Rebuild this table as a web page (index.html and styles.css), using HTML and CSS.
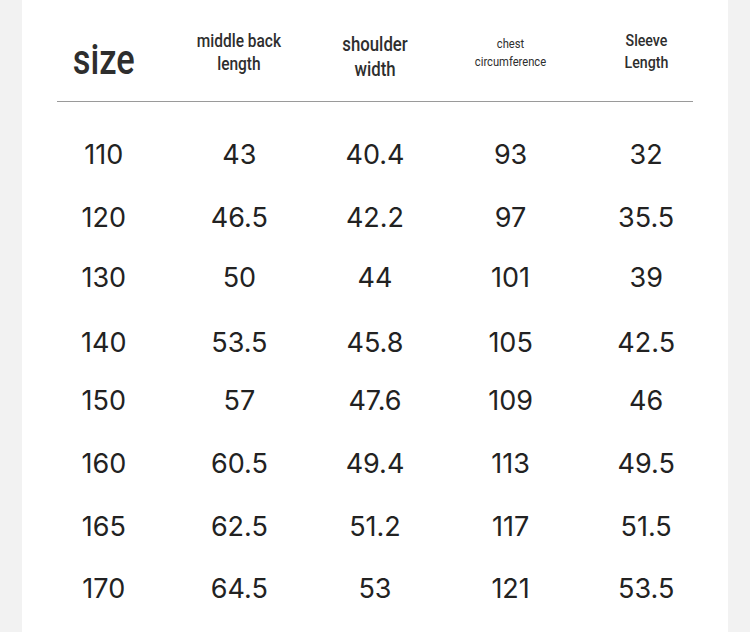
FILE: index.html
```html
<!DOCTYPE html>
<html>
<head>
<meta charset="utf-8">
<link rel="stylesheet" href="styles.css">
</head>
<body>
<div class="card">
  <div class="head">
    <div class="hcell"><span class="lbl size">size</span></div>
    <div class="hcell"><span class="lbl h-back">middle back<br>length</span></div>
    <div class="hcell"><span class="lbl h-shoulder">shoulder<br>width</span></div>
    <div class="hcell"><span class="lbl h-chest">chest<br>circumference</span></div>
    <div class="hcell"><span class="lbl h-sleeve">Sleeve<br>Length</span></div>
  </div>
  <div class="rule"></div>
  <div class="rows">
    <div class="row"><span>110</span><span>43</span><span>40.4</span><span>93</span><span>32</span></div>
    <div class="row"><span>120</span><span>46.5</span><span>42.2</span><span>97</span><span>35.5</span></div>
    <div class="row"><span>130</span><span>50</span><span>44</span><span>101</span><span>39</span></div>
    <div class="row"><span>140</span><span>53.5</span><span>45.8</span><span>105</span><span>42.5</span></div>
    <div class="row"><span>150</span><span>57</span><span>47.6</span><span>109</span><span>46</span></div>
    <div class="row"><span>160</span><span>60.5</span><span>49.4</span><span>113</span><span>49.5</span></div>
    <div class="row"><span>165</span><span>62.5</span><span>51.2</span><span>117</span><span>51.5</span></div>
    <div class="row"><span>170</span><span>64.5</span><span>53</span><span>121</span><span>53.5</span></div>
  </div>
</div>
</body>
</html>
```

FILE: styles.css
```css
html, body {
  margin: 0;
  padding: 0;
  background: #f2f2f2;
}
.card {
  margin: 0 22px;
  width: 706px;
  height: 632px;
  background: #ffffff;
  box-sizing: border-box;
  padding: 0 14px;
  overflow: hidden;
  color: #222;
}
.head {
  display: grid;
  grid-template-columns: repeat(5, 1fr);
  height: 101px;
  align-items: center;
}
.hcell {
  text-align: center;
}
.lbl {
  display: inline-block;
  font-family: "Roboto", sans-serif;
  font-weight: 500;
  color: #2e2e2e;
  transform: scaleX(0.86);
}
.size {
  font-size: 42px;
  line-height: 48px;
  transform: scaleX(0.82);
  padding-top: 18px;
}
.h-back {
  font-size: 18px;
  line-height: 23px;
  margin-top: 3px;
}
.h-shoulder {
  font-size: 19.5px;
  line-height: 25px;
  margin-top: 12px;
}
.h-chest {
  font-size: 13px;
  line-height: 18px;
  font-weight: 400;
  margin-top: 5px;
}
.h-sleeve {
  font-size: 16.5px;
  line-height: 22px;
  margin-top: 3px;
}
.rule {
  margin: 0 21px;
  height: 0;
  border-top: 1.5px solid #9a9a9a;
}
.rows {
  display: flex;
  flex-direction: column;
  padding-top: 32px;
}
.row {
  display: grid;
  grid-template-columns: repeat(5, 1fr);
  height: 40px;
  align-items: center;
  font-family: "Inter", "Liberation Sans", sans-serif;
  font-size: 27px;
  font-weight: 400;
  color: #222;
}
.row span {
  text-align: center;
}
.row:nth-child(2) { margin-top: 23px; }
.row:nth-child(3) { margin-top: 20px; }
.row:nth-child(4) { margin-top: 25px; }
.row:nth-child(5) { margin-top: 18px; }
.row:nth-child(6) { margin-top: 23px; }
.row:nth-child(7) { margin-top: 23px; }
.row:nth-child(8) { margin-top: 22px; }
```
